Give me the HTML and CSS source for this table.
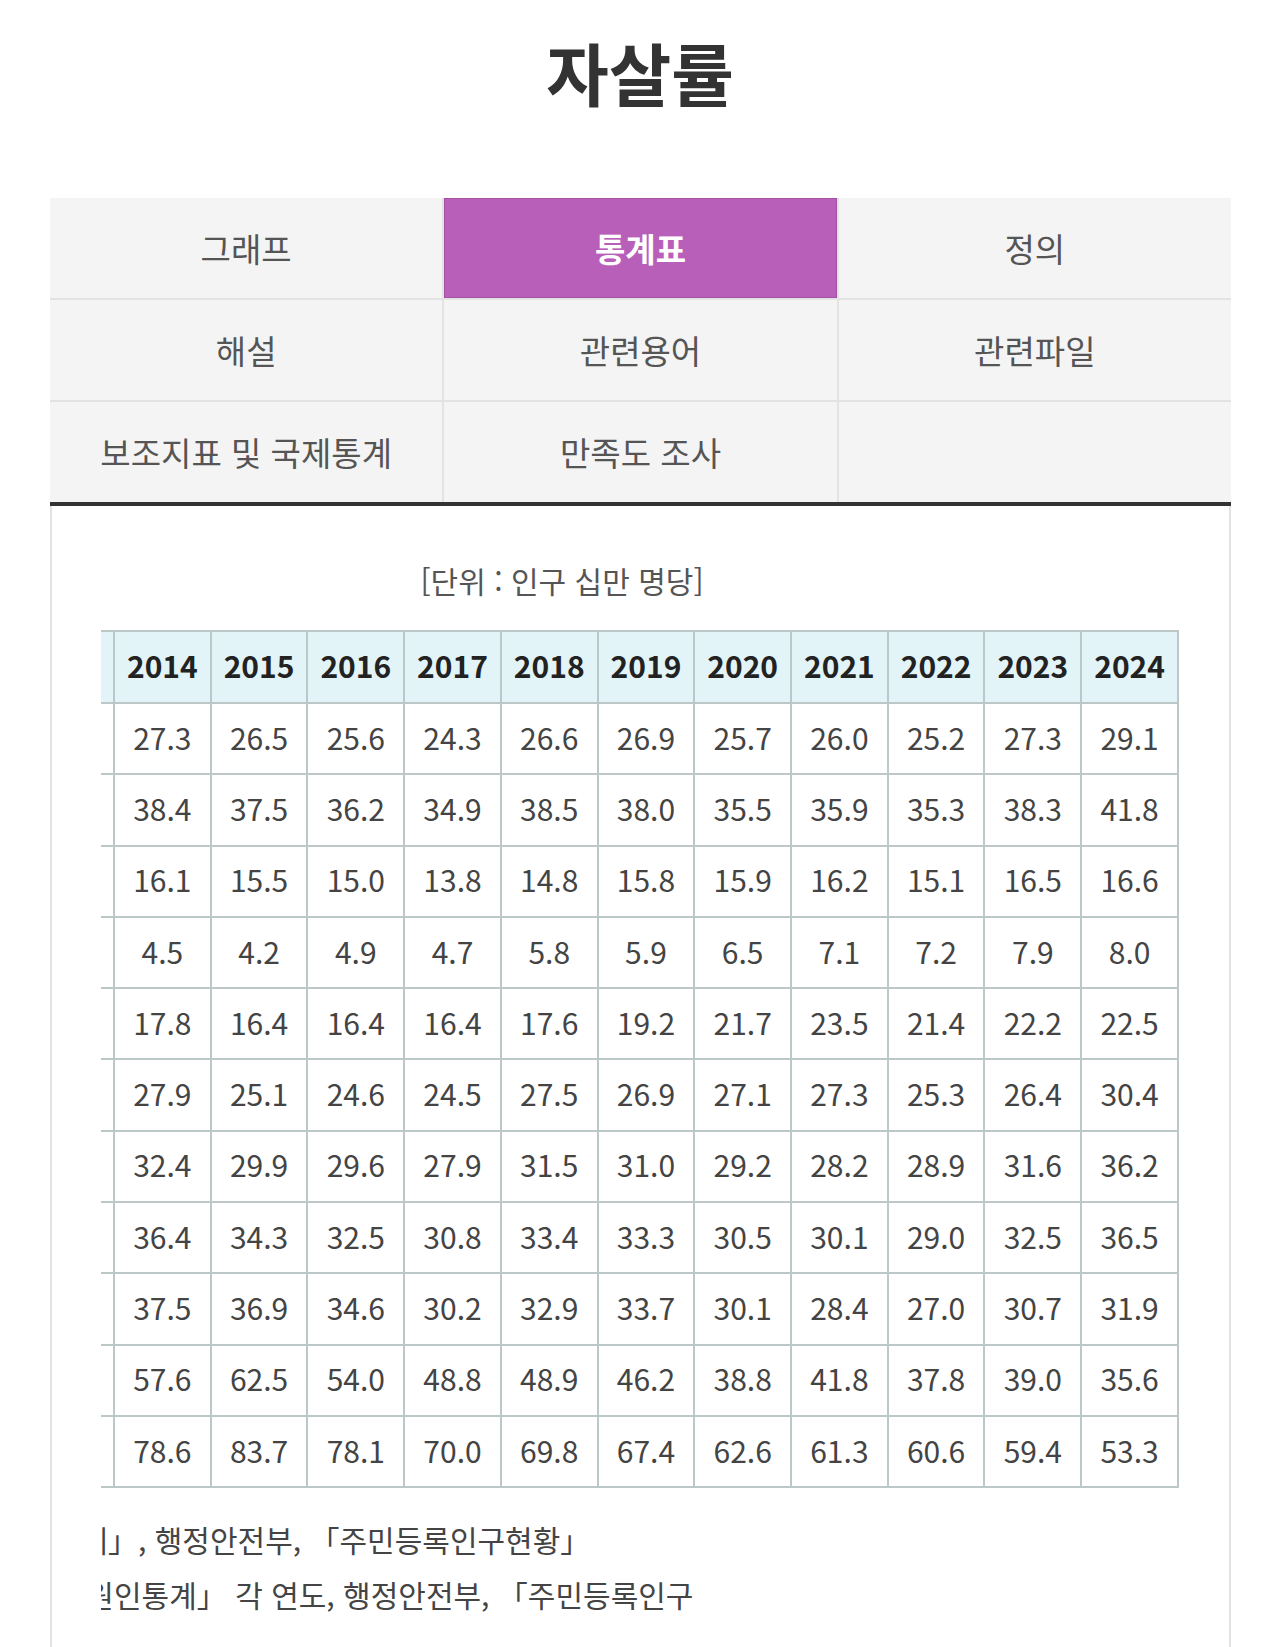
FILE: index.html
```html
<!DOCTYPE html>
<html lang="ko">
<head>
<meta charset="utf-8">
<title>자살률</title>
<link rel="stylesheet" href="styles.css">
</head>
<body>
<div class="page">
  <h1 class="title">자살률</h1>

  <nav class="tabs">
    <a class="tab">그래프</a>
    <a class="tab active">통계표</a>
    <a class="tab">정의</a>
    <a class="tab">해설</a>
    <a class="tab">관련용어</a>
    <a class="tab">관련파일</a>
    <a class="tab">보조지표 및 국제통계</a>
    <a class="tab">만족도 조사</a>
    <span class="tab"></span>
  </nav>

  <section class="panel">
    <div class="scroll">
      <div class="scroll-content">
        <p class="unit">[단위 : 인구 십만 명당]</p>
        <table class="stats">
          <colgroup>
            <col class="col-label">
            <col><col><col><col><col><col><col><col><col><col><col>
          </colgroup>
          <thead>
            <tr><th>구분</th><th>2014</th><th>2015</th><th>2016</th><th>2017</th><th>2018</th><th>2019</th><th>2020</th><th>2021</th><th>2022</th><th>2023</th><th>2024</th></tr>
          </thead>
          <tbody>
            <tr><th>전체</th><td>27.3</td><td>26.5</td><td>25.6</td><td>24.3</td><td>26.6</td><td>26.9</td><td>25.7</td><td>26.0</td><td>25.2</td><td>27.3</td><td>29.1</td></tr>
            <tr><th>남자</th><td>38.4</td><td>37.5</td><td>36.2</td><td>34.9</td><td>38.5</td><td>38.0</td><td>35.5</td><td>35.9</td><td>35.3</td><td>38.3</td><td>41.8</td></tr>
            <tr><th>여자</th><td>16.1</td><td>15.5</td><td>15.0</td><td>13.8</td><td>14.8</td><td>15.8</td><td>15.9</td><td>16.2</td><td>15.1</td><td>16.5</td><td>16.6</td></tr>
            <tr><th>10대</th><td>4.5</td><td>4.2</td><td>4.9</td><td>4.7</td><td>5.8</td><td>5.9</td><td>6.5</td><td>7.1</td><td>7.2</td><td>7.9</td><td>8.0</td></tr>
            <tr><th>20대</th><td>17.8</td><td>16.4</td><td>16.4</td><td>16.4</td><td>17.6</td><td>19.2</td><td>21.7</td><td>23.5</td><td>21.4</td><td>22.2</td><td>22.5</td></tr>
            <tr><th>30대</th><td>27.9</td><td>25.1</td><td>24.6</td><td>24.5</td><td>27.5</td><td>26.9</td><td>27.1</td><td>27.3</td><td>25.3</td><td>26.4</td><td>30.4</td></tr>
            <tr><th>40대</th><td>32.4</td><td>29.9</td><td>29.6</td><td>27.9</td><td>31.5</td><td>31.0</td><td>29.2</td><td>28.2</td><td>28.9</td><td>31.6</td><td>36.2</td></tr>
            <tr><th>50대</th><td>36.4</td><td>34.3</td><td>32.5</td><td>30.8</td><td>33.4</td><td>33.3</td><td>30.5</td><td>30.1</td><td>29.0</td><td>32.5</td><td>36.5</td></tr>
            <tr><th>60대</th><td>37.5</td><td>36.9</td><td>34.6</td><td>30.2</td><td>32.9</td><td>33.7</td><td>30.1</td><td>28.4</td><td>27.0</td><td>30.7</td><td>31.9</td></tr>
            <tr><th>70대</th><td>57.6</td><td>62.5</td><td>54.0</td><td>48.8</td><td>48.9</td><td>46.2</td><td>38.8</td><td>41.8</td><td>37.8</td><td>39.0</td><td>35.6</td></tr>
            <tr><th>80세 이상</th><td>78.6</td><td>83.7</td><td>78.1</td><td>70.0</td><td>69.8</td><td>67.4</td><td>62.6</td><td>61.3</td><td>60.6</td><td>59.4</td><td>53.3</td></tr>
          </tbody>
        </table>
      </div>
    </div>
    <div class="scroll">
      <div class="notes">
        <p class="note">1)통계청, 「사망원인통계」, 행정안전부, 「주민등록인구현황」</p>
        <p class="note">2) 자료 : 통계청, 「사망원인통계」 각 연도, 행정안전부, 「주민등록인구</p>
      </div>
    </div>
  </section>
</div>
</body>
</html>
```
FILE: styles.css
```css
* {
  box-sizing: border-box;
}

html, body {
  margin: 0;
  padding: 0;
  background: #ffffff;
}

body {
  font-family: "Noto Sans CJK KR", "Noto Sans", "Liberation Sans", sans-serif;
  color: #333333;
}

.page {
  width: 1280px;
}

.title {
  margin: 0 0 78px;
  padding-top: 24px;
  text-align: center;
  font-size: 68px;
  line-height: 96px;
  font-weight: 700;
  color: #333333;
}

.tabs {
  margin: 0 49px 0 50px;
  display: grid;
  grid-template-columns: repeat(3, 1fr);
  grid-auto-rows: 100px;
  gap: 2px;
  background: #e3e3e3;
  border-bottom: 4px solid #333333;
}

.tab {
  display: flex;
  align-items: center;
  justify-content: center;
  background: #f4f4f4;
  font-size: 33px;
  color: #555555;
  text-decoration: none;
}

.tab.active {
  background: #b860b9;
  color: #ffffff;
  font-weight: 700;
  box-shadow: inset 0 0 0 1px #a651a8;
}

.panel {
  margin: 0 49px 0 50px;
  padding: 54px 50px 80px 49px;
  border-left: 2px solid #e3e3e3;
  border-right: 2px solid #e3e3e3;
  min-height: 1200px;
}

.scroll {
  display: flex;
  justify-content: flex-end;
  overflow: hidden;
}

.scroll-content {
  flex: none;
  width: 1234px;
}

.unit {
  margin: 0 0 30px;
  text-align: center;
  font-size: 30px;
  line-height: 40px;
  color: #555555;
}

.stats {
  width: 1234px;
  table-layout: fixed;
  border-collapse: collapse;
}

.col-label {
  width: 168px;
}

.stats th,
.stats td {
  border: 2px solid #bcc8c8;
  padding: 0 0 4px;
  text-align: center;
  font-size: 30px;
  white-space: nowrap;
}

.stats thead tr {
  height: 72px;
}

.stats thead th {
  background: #e2f4f7;
  color: #222222;
  font-weight: 700;
}

.stats tbody tr {
  height: 71.3px;
}

.stats tbody th {
  font-weight: 400;
  color: #444444;
}

.stats td {
  color: #444444;
}

.notes {
  flex: none;
  width: 1393px;
  margin-top: 24px;
}

.note {
  margin: 0;
  font-size: 30px;
  line-height: 55px;
  color: #444444;
  white-space: nowrap;
}
```
